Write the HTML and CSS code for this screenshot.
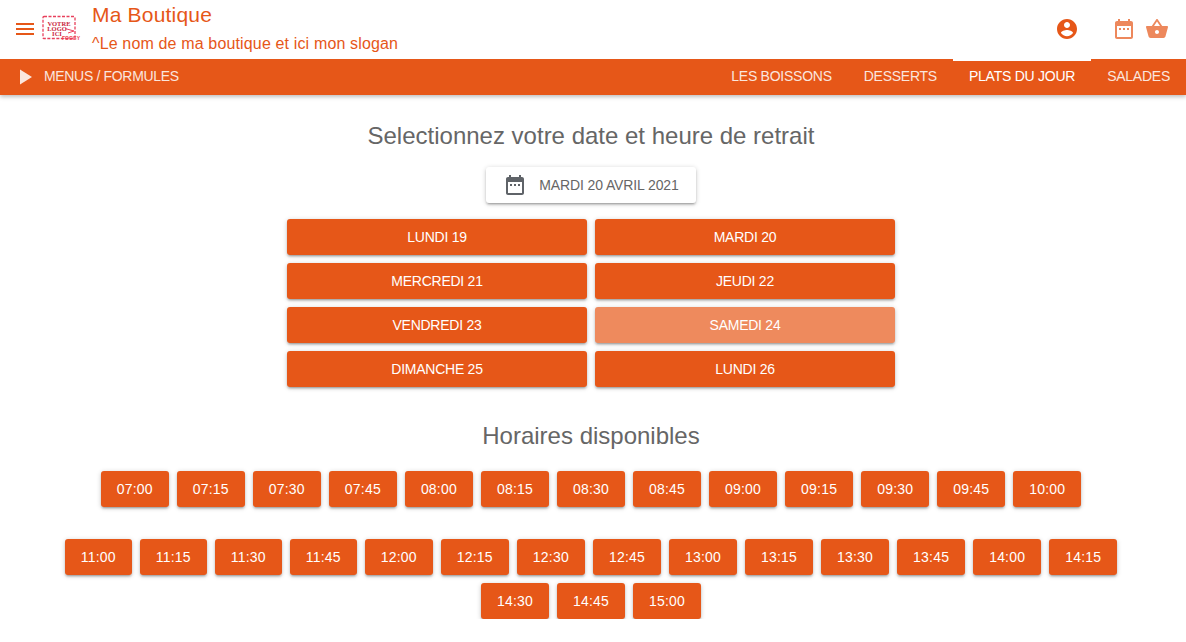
FILE: index.html
```html
<!DOCTYPE html>
<html lang="fr">
<head>
  <meta charset="UTF-8">
  <title>Ma Boutique</title>
  <link rel="stylesheet" href="styles.css">
</head>
<body>
  <header class="site-header">
    <div class="toolbar">
      <svg class="icon menu-icon" viewBox="0 0 24 24"><path d="M3 18h18v-2H3v2zm0-5h18v-2H3v2zm0-7v2h18V6H3z"/></svg>
      <svg class="logo" viewBox="0 0 40 26">
        <rect x="1" y="1.500" width="32" height="22" rx="1" class="logo-frame"/>
        <text x="17" y="10.500" class="logo-text">VOTRE</text>
        <text x="15" y="15.500" class="logo-text">LOGO</text>
        <text x="15" y="20.500" class="logo-text">ICI</text>
        <path d="M23 13.500l9 2.500-6 2" class="logo-mark"/>
        <text x="38" y="25" class="logo-foggy">FOGGY</text>
      </svg>
      <div class="brand">
        <div class="brand-name">Ma Boutique</div>
        <div class="brand-slogan">^Le nom de ma boutique et ici mon slogan</div>
      </div>
      <div class="toolbar-actions">
        <svg class="icon account-icon" viewBox="0 0 24 24"><path d="M12 2C6.480 2 2 6.480 2 12s4.480 10 10 10 10-4.480 10-10S17.520 2 12 2zm0 3c1.660 0 3 1.340 3 3s-1.340 3-3 3-3-1.340-3-3 1.340-3 3-3zm0 14.200c-2.500 0-4.710-1.280-6-3.220.03-1.990 4-3.080 6-3.080 1.990 0 5.970 1.090 6 3.080-1.290 1.940-3.500 3.220-6 3.220z"/></svg>
        <svg class="icon faded-icon" viewBox="0 0 24 24"><path d="M9 11H7v2h2v-2zm4 0h-2v2h2v-2zm4 0h-2v2h2v-2zm2-7h-1V2h-2v2H8V2H6v2H5c-1.110 0-1.990.9-1.990 2L3 20c0 1.100.89 2 2 2h14c1.100 0 2-.9 2-2V6c0-1.100-.9-2-2-2zm0 16H5V9h14v11z"/></svg>
        <svg class="icon faded-icon" viewBox="0 0 24 24"><path d="M17.210 9l-4.380-6.560c-.19-.28-.51-.42-.83-.42-.32 0-.64.14-.83.43L6.790 9H2c-.55 0-1 .45-1 1 0 .09.01.18.04.27l2.540 9.270c.23.84 1 1.460 1.920 1.460h13c.92 0 1.690-.62 1.930-1.460l2.540-9.270L23 10c0-.55-.45-1-1-1h-4.790zM9 9l3-4.400L15 9H9zm3 8c-1.100 0-2-.9-2-2s.9-2 2-2 2 .9 2 2-.9 2-2 2z"/></svg>
      </div>
    </div>
    <nav class="tabs">
      <a class="tab-menu">
        <svg class="icon play-icon" viewBox="0 0 24 24"><path d="M7 4.500v15L19 12z"/></svg>
        <span>Menus / Formules</span>
      </a>
      <div class="tabs-right">
        <a class="tab">Les boissons</a>
        <a class="tab">Desserts</a>
        <a class="tab active">Plats du jour</a>
        <a class="tab">Salades</a>
      </div>
    </nav>
  </header>

  <main class="content">
    <h2 class="section-title">Selectionnez votre date et heure de retrait</h2>

    <button class="date-picker">
      <svg class="icon date-icon" viewBox="0 0 24 24"><path d="M9 11H7v2h2v-2zm4 0h-2v2h2v-2zm4 0h-2v2h2v-2zm2-7h-1V2h-2v2H8V2H6v2H5c-1.110 0-1.990.9-1.990 2L3 20c0 1.100.89 2 2 2h14c1.100 0 2-.9 2-2V6c0-1.100-.9-2-2-2zm0 16H5V9h14v11z"/></svg>
      <span>Mardi 20 avril 2021</span>
    </button>

    <div class="days">
      <button class="btn">Lundi 19</button>
      <button class="btn">Mardi 20</button>
      <button class="btn">Mercredi 21</button>
      <button class="btn">Jeudi 22</button>
      <button class="btn">Vendredi 23</button>
      <button class="btn selected">Samedi 24</button>
      <button class="btn">Dimanche 25</button>
      <button class="btn">Lundi 26</button>
    </div>

    <h2 class="section-title hours-title">Horaires disponibles</h2>

    <div class="slots">
      <button class="btn">07:00</button>
      <button class="btn">07:15</button>
      <button class="btn">07:30</button>
      <button class="btn">07:45</button>
      <button class="btn">08:00</button>
      <button class="btn">08:15</button>
      <button class="btn">08:30</button>
      <button class="btn">08:45</button>
      <button class="btn">09:00</button>
      <button class="btn">09:15</button>
      <button class="btn">09:30</button>
      <button class="btn">09:45</button>
      <button class="btn">10:00</button>
    </div>

    <div class="slots slots-afternoon">
      <button class="btn">11:00</button>
      <button class="btn">11:15</button>
      <button class="btn">11:30</button>
      <button class="btn">11:45</button>
      <button class="btn">12:00</button>
      <button class="btn">12:15</button>
      <button class="btn">12:30</button>
      <button class="btn">12:45</button>
      <button class="btn">13:00</button>
      <button class="btn">13:15</button>
      <button class="btn">13:30</button>
      <button class="btn">13:45</button>
      <button class="btn">14:00</button>
      <button class="btn">14:15</button>
      <button class="btn">14:30</button>
      <button class="btn">14:45</button>
      <button class="btn">15:00</button>
    </div>
  </main>
</body>
</html>
```

FILE: styles.css
```css
body {
  margin: 0;
  background: #ffffff;
  color: #666666;
  font-family: 'Liberation Sans', Arial, sans-serif;
  font-size: 14px;
  overflow: hidden;
}

.icon {
  width: 24px;
  height: 24px;
  fill: currentColor;
  flex-shrink: 0;
}

.site-header {
  box-shadow: 0 2px 4px rgba(0, 0, 0, 0.25);
  color: #e65718;
}

.toolbar {
  height: 59px;
  display: flex;
  align-items: flex-start;
  padding: 0 17px 0 13px;
}

.menu-icon {
  margin-top: 17px;
}

.logo {
  width: 40px;
  height: 26px;
  margin: 15px 10px 0 5px;
  flex-shrink: 0;
}

.logo-frame {
  fill: none;
  stroke: #e8405c;
  stroke-width: 1.300;
  stroke-dasharray: 3 1.500;
}

.logo-text {
  font-family: 'Liberation Serif', serif;
  font-size: 6.500px;
  font-weight: bold;
  fill: #c9253c;
  text-anchor: middle;
}

.logo-mark {
  fill: none;
  stroke: #ee4560;
  stroke-width: 1;
}

.logo-foggy {
  font-size: 5px;
  font-weight: bold;
  fill: #ee3b4e;
  text-anchor: end;
}

.brand {
  padding-top: 3px;
}

.brand-name {
  font-size: 21px;
  line-height: 24px;
  letter-spacing: 0.2px;
}

.brand-slogan {
  margin-top: 5px;
  font-size: 16px;
  line-height: 24px;
  letter-spacing: 0.15px;
}

.toolbar-actions {
  margin-left: auto;
  display: flex;
  padding-top: 17px;
}

.account-icon {
  margin-right: 24px;
}

.faded-icon {
  margin-left: 9px;
  opacity: 0.7;
}

.tabs {
  height: 36px;
  display: flex;
  justify-content: space-between;
  background: #e65718;
  color: #ffffff;
  text-transform: uppercase;
  letter-spacing: -0.25px;
}

.tab-menu {
  display: flex;
  align-items: center;
  gap: 7px;
  padding-left: 13px;
  padding-bottom: 2px;
  letter-spacing: -0.33px;
  opacity: 0.85;
}

.play-icon {
  margin-top: 2px;
}

.tabs-right {
  display: flex;
}

.tab {
  display: flex;
  align-items: center;
  padding: 0 16px 2px;
  opacity: 0.85;
}

.tab.active {
  opacity: 1;
  box-shadow: inset 0 2px 0 #ffffff;
}

.content {
  display: flex;
  flex-direction: column;
  align-items: center;
  padding-right: 4px;
}

.section-title {
  margin: 26px 0 16px;
  font-size: 24px;
  line-height: 30px;
  font-weight: normal;
  color: #666666;
}

.date-picker {
  height: 36px;
  display: flex;
  align-items: center;
  gap: 12px;
  padding: 0 17px;
  border: 0;
  border-radius: 3px;
  background: #ffffff;
  color: #666666;
  font: inherit;
  letter-spacing: -0.12px;
  text-transform: uppercase;
  box-shadow: 0 1px 5px rgba(0, 0, 0, 0.2), 0 2px 2px rgba(0, 0, 0, 0.14), 0 3px 1px -2px rgba(0, 0, 0, 0.12);
}

.date-icon {
  color: #5f6368;
}

.btn {
  height: 36px;
  padding: 0 16px;
  border: 0;
  border-radius: 3px;
  background: #e65718;
  color: #ffffff;
  font: inherit;
  text-transform: uppercase;
  box-shadow: 0 1px 5px rgba(0, 0, 0, 0.2), 0 2px 2px rgba(0, 0, 0, 0.14), 0 3px 1px -2px rgba(0, 0, 0, 0.12);
}

.btn.selected {
  background: #ee8a5d;
}

.days {
  width: 608px;
  display: grid;
  grid-template-columns: 300px 300px;
  gap: 8px;
  margin-top: 16px;
}

.days .btn {
  letter-spacing: -0.25px;
}

.hours-title {
  margin: 34px 0 20px;
}

.slots {
  max-width: 1100px;
  display: flex;
  flex-wrap: wrap;
  justify-content: center;
  gap: 8px;
}

.slots .btn {
  letter-spacing: 0.2px;
}

.slots-afternoon {
  margin-top: 32px;
}
```
